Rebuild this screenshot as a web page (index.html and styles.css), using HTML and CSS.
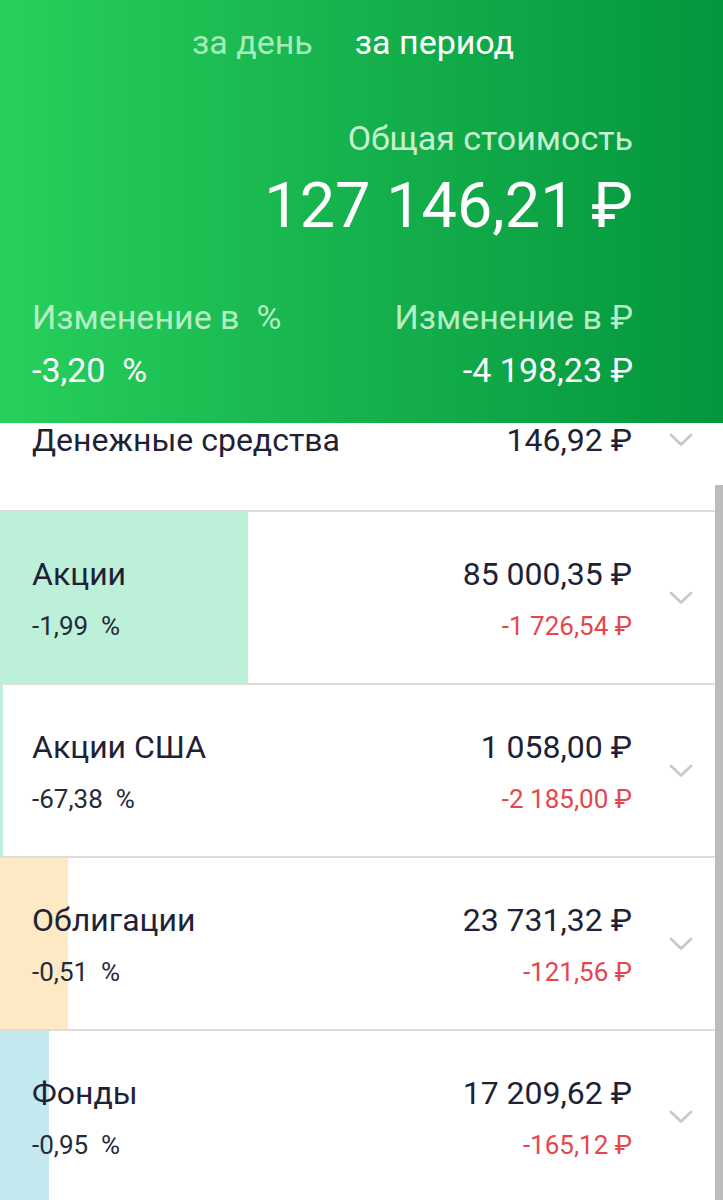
FILE: index.html
```html
<!DOCTYPE html>
<html lang="ru">
<head>
<meta charset="utf-8">
<title>Портфель</title>
<link rel="stylesheet" href="styles.css">
</head>
<body>
<div class="screen">
  <header class="summary">
    <nav class="tabs">
      <span class="tab">за день</span>
      <span class="tab active">за период</span>
    </nav>
    <div class="total">
      <div class="total-label">Общая стоимость</div>
      <div class="total-value">127 146,21 ₽</div>
    </div>
    <div class="changes">
      <div class="change">
        <div class="change-label">Изменение в&nbsp; %</div>
        <div class="change-value">-3,20&nbsp; %</div>
      </div>
      <div class="change change-right">
        <div class="change-label">Изменение в ₽</div>
        <div class="change-value">-4 198,23 ₽</div>
      </div>
    </div>
  </header>

  <section class="list">
    <div class="row row-cash">
      <div class="col-left"><div class="name">Денежные средства</div></div>
      <div class="col-right"><div class="value">146,92 ₽</div></div>
      <div class="chev"><svg viewBox="0 0 24 14" width="24" height="14"><polyline points="2,2 12,11.5 22,2"/></svg></div>
    </div>

    <div class="row">
      <div class="bar bar-green" style="width:248px"></div>
      <div class="col-left"><div class="name">Акции</div><div class="pct">-1,99&nbsp; %</div></div>
      <div class="col-right"><div class="value">85 000,35 ₽</div><div class="delta">-1 726,54 ₽</div></div>
      <div class="chev"><svg viewBox="0 0 24 14" width="24" height="14"><polyline points="2,2 12,11.5 22,2"/></svg></div>
    </div>

    <div class="row">
      <div class="bar bar-green" style="width:3px"></div>
      <div class="col-left"><div class="name">Акции США</div><div class="pct">-67,38&nbsp; %</div></div>
      <div class="col-right"><div class="value">1 058,00 ₽</div><div class="delta">-2 185,00 ₽</div></div>
      <div class="chev"><svg viewBox="0 0 24 14" width="24" height="14"><polyline points="2,2 12,11.5 22,2"/></svg></div>
    </div>

    <div class="row">
      <div class="bar bar-yellow" style="width:68px"></div>
      <div class="col-left"><div class="name">Облигации</div><div class="pct">-0,51&nbsp; %</div></div>
      <div class="col-right"><div class="value">23 731,32 ₽</div><div class="delta">-121,56 ₽</div></div>
      <div class="chev"><svg viewBox="0 0 24 14" width="24" height="14"><polyline points="2,2 12,11.5 22,2"/></svg></div>
    </div>

    <div class="row">
      <div class="bar bar-blue" style="width:49px"></div>
      <div class="col-left"><div class="name">Фонды</div><div class="pct">-0,95&nbsp; %</div></div>
      <div class="col-right"><div class="value">17 209,62 ₽</div><div class="delta">-165,12 ₽</div></div>
      <div class="chev"><svg viewBox="0 0 24 14" width="24" height="14"><polyline points="2,2 12,11.5 22,2"/></svg></div>
    </div>
  </section>

  <div class="scrollbar"></div>
</div>
</body>
</html>
```

FILE: styles.css
```css
* { box-sizing: border-box; }

html, body {
  margin: 0;
  padding: 0;
  background: #ffffff;
}

body {
  font-family: Roboto, "Noto Sans", "Liberation Sans", sans-serif;
  color: #1f2236;
}

.screen {
  position: relative;
  width: 723px;
  height: 1200px;
  overflow: hidden;
}

/* ---------- header ---------- */
.summary {
  height: 423px;
  background: linear-gradient(to right, #27d05b 0%, #17b44e 45%, #04963d 100%);
  padding: 20px 90px 0 32px;
  display: flex;
  flex-direction: column;
}

.tabs {
  display: flex;
  gap: 42px;
  padding-left: 160px;
  height: 44px;
  line-height: 44px;
}

.tab {
  font-size: 34px;
  color: #a7ebbd;
}

.tab.active {
  color: #ffffff;
}

.total {
  margin-top: 54px;
  text-align: right;
}

.total-label {
  font-size: 34px;
  line-height: 40px;
  color: #c6f1d2;
}

.total-value {
  margin-top: 10px;
  font-size: 63px;
  line-height: 76px;
  color: #ffffff;
}

.changes {
  margin-top: 53px;
  display: flex;
  justify-content: space-between;
}

.change-label {
  font-size: 34px;
  line-height: 40px;
  color: #b5eec5;
}

.change-value {
  margin-top: 13px;
  font-size: 34px;
  line-height: 40px;
  color: #ffffff;
}

.change-right {
  text-align: right;
}

/* ---------- list ---------- */
.row {
  position: relative;
  display: flex;
  align-items: center;
  height: 173px;
  padding: 0 0 0 32px;
  border-top: 2px solid #dcdcdc;
}

.row-cash {
  height: 87px;
  border-top: none;
  align-items: flex-start;
}

.bar {
  position: absolute;
  left: 0;
  top: 0;
  bottom: 0;
}

.bar-green { background: #bdf0d8; }
.bar-yellow { background: #fde9c4; }
.bar-blue { background: #c3e8ef; }

.col-left,
.col-right {
  position: relative;
  display: flex;
  flex-direction: column;
}

.col-left {
  flex: 1;
}

.col-right {
  align-items: flex-end;
}

.name,
.value {
  font-size: 32px;
  line-height: 40px;
  color: #1f2236;
}

.pct,
.delta {
  margin-top: 16px;
  font-size: 26px;
  line-height: 32px;
}

.pct { color: #262a3a; }
.delta { color: #e5464b; }

.row-cash .name,
.row-cash .value {
  line-height: 34px;
}

.chev {
  position: relative;
  width: 91px;
  display: flex;
  justify-content: center;
  padding-left: 6px;
}

.row-cash .chev {
  padding-top: 10px;
}

.chev svg polyline {
  fill: none;
  stroke: #c9c9cb;
  stroke-width: 2.8;
  stroke-linecap: round;
  stroke-linejoin: round;
}

.scrollbar {
  position: absolute;
  right: 0;
  top: 485px;
  width: 8px;
  height: 715px;
  background: #bcbcbc;
}
```
